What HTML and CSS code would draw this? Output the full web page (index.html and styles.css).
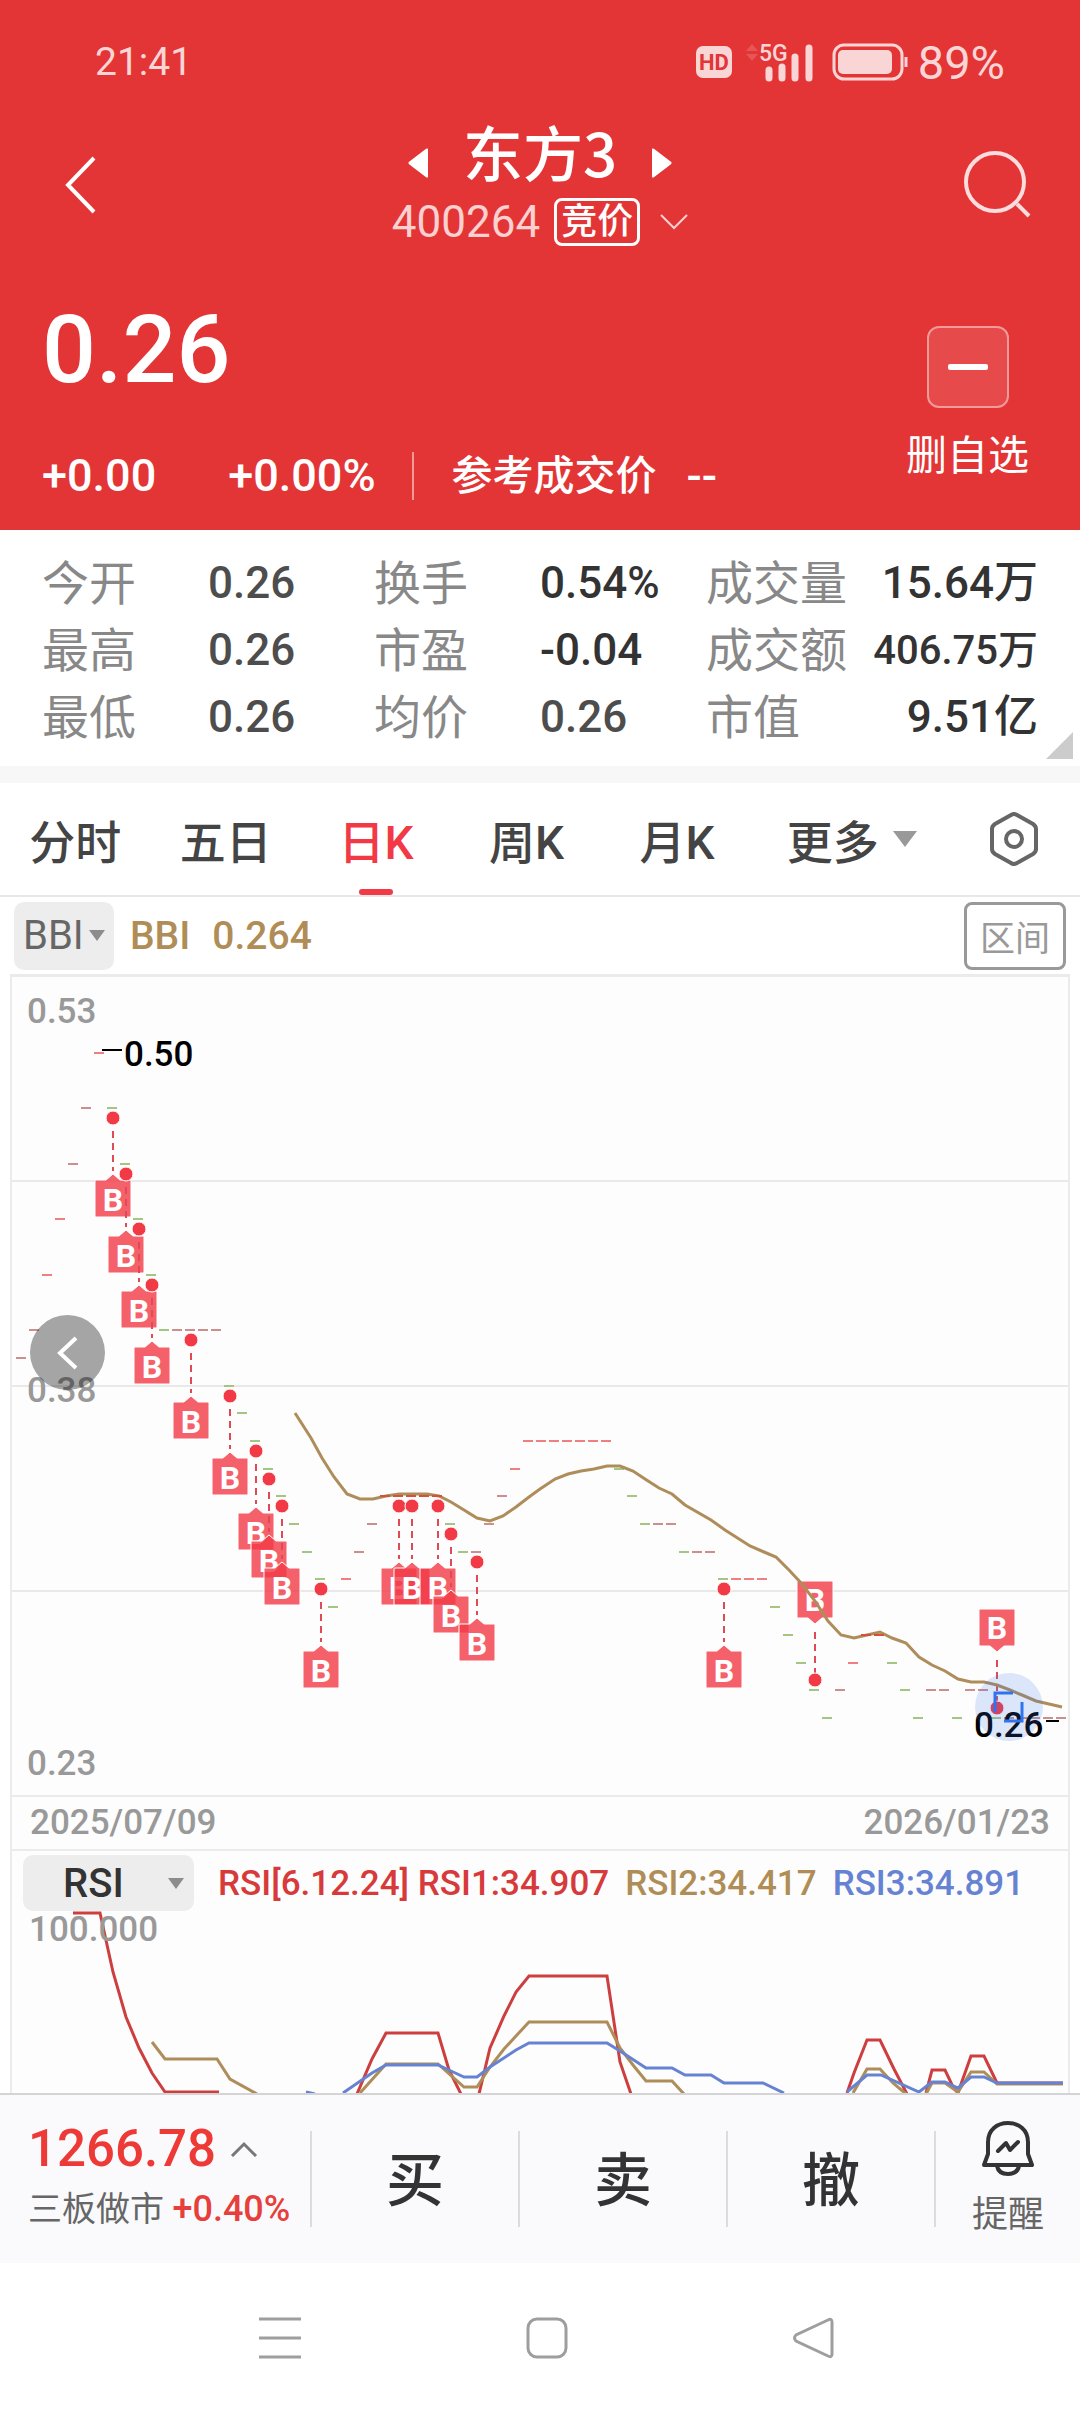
FILE: index.html
```html
<!DOCTYPE html>
<html lang="zh-CN">
<head>
  <meta charset="UTF-8">
  <meta name="viewport" content="width=device-width, initial-scale=1.0">
  <title>东方3 400264</title>
  <link rel="stylesheet" href="styles.css">
</head>
<body>
  <header class="top">
    <div class="status-bar">
      <span class="clock">21:41</span>
      <div class="status-icons">
        <svg class="icon-hd" viewBox="0 0 36 32" width="36" height="32">
          <rect width="36" height="32" rx="7" fill="currentColor"/>
          <text x="18" y="24" text-anchor="middle" class="hd-text">HD</text>
        </svg>
        <svg class="icon-signal" viewBox="0 -8 68 54" width="68" height="54">
          <path d="M0 8l6-7 6 7zM0 11l6 7 6-7z" fill="#fff" opacity=".16"/>
          <text x="13" y="18" class="net-text">5G</text>
          <path d="M23 27v8M36 24v11M49 14v21M63 5v30" stroke="currentColor" stroke-width="7" stroke-linecap="round"/>
        </svg>
        <svg class="icon-battery" viewBox="0 0 76 38" width="76" height="38">
          <rect x="2" y="2" width="68" height="34" rx="10" fill="none" stroke="currentColor" stroke-width="3"/>
          <rect x="6" y="7" width="54" height="24" rx="5" fill="currentColor"/>
          <path d="M74 14v10" stroke="currentColor" stroke-width="3"/>
        </svg>
        <span class="percent">89%</span>
      </div>
    </div>

    <div class="title-bar">
      <button class="icon-btn back" aria-label="返回">
        <svg viewBox="0 0 32 58" width="32" height="58"><path d="M29 2L3 29l26 27" fill="none" stroke="#fff" stroke-width="4"/></svg>
      </button>
      <div class="title">
        <div class="title-row">
          <button class="icon-btn" aria-label="上一只">
            <svg viewBox="0 0 20 30" width="20" height="30"><path d="M19 2v26L2 15z" fill="#fff" stroke="#fff" stroke-width="3" stroke-linejoin="round"/></svg>
          </button>
          <h1>东方3</h1>
          <button class="icon-btn" aria-label="下一只">
            <svg viewBox="0 0 20 30" width="20" height="30"><path d="M1 2v26l17-13z" fill="#fff" stroke="#fff" stroke-width="3" stroke-linejoin="round"/></svg>
          </button>
        </div>
        <div class="code-row">
          <span class="code">400264</span>
          <span class="badge">竞价</span>
          <svg viewBox="0 0 28 16" width="28" height="16"><path d="M1 1l13 13L27 1" fill="none" stroke="#fbd0d0" stroke-width="2"/></svg>
        </div>
      </div>
      <button class="icon-btn search" aria-label="搜索">
        <svg viewBox="0 0 68 70" width="68" height="70"><circle cx="32" cy="32" r="29" fill="none" stroke="#fcdcdc" stroke-width="4"/><path d="M54 54l12 12" stroke="#fcdcdc" stroke-width="4"/></svg>
      </button>
    </div>

    <div class="quote">
      <div class="quote-main">
        <div class="price">0.26</div>
        <div class="change">
          <span>+0.00</span>
          <span class="rate">+0.00%</span>
          <span class="ref">参考成交价</span>
          <span>--</span>
        </div>
      </div>
      <button class="watch">
        <span class="watch-icon"></span>
        <span>删自选</span>
      </button>
    </div>
  </header>

  <main>
    <dl class="stats">
      <dt>今开</dt><dd class="flat">0.26</dd>
      <dt>换手</dt><dd>0.54%</dd>
      <dt>成交量</dt><dd class="end">15.64万</dd>
      <dt>最高</dt><dd class="flat">0.26</dd>
      <dt>市盈</dt><dd>-0.04</dd>
      <dt>成交额</dt><dd class="end small">406.75万</dd>
      <dt>最低</dt><dd class="flat">0.26</dd>
      <dt>均价</dt><dd class="flat">0.26</dd>
      <dt>市值</dt><dd class="end">9.51亿</dd>
    </dl>

    <nav class="tabs">
      <button>分时</button>
      <button>五日</button>
      <button class="active">日K</button>
      <button>周K</button>
      <button>月K</button>
      <button class="more">更多</button>
      <button aria-label="设置">
        <svg viewBox="0 0 50 54" width="50" height="54" fill="none" stroke="#666" stroke-width="4">
          <path d="M22 3q3-2 6 0l16 9q3 2 3 5v20q0 3-3 5l-16 9q-3 2-6 0L6 42q-3-2-3-5V17q0-3 3-5z"/>
          <circle cx="25" cy="27" r="8"/>
        </svg>
      </button>
    </nav>

    <div class="indicator">
      <label class="picker picker-main">
        <select aria-label="主图指标"><option>BBI</option></select>
      </label>
      <div class="indicator-values gold">
        <span>BBI</span>
        <span>0.264</span>
      </div>
      <button class="range">区间</button>
    </div>

    <section class="chart">
      <svg class="kline" viewBox="12 3 1056 818" role="img" aria-label="日K">
        <defs>
          <!-- buy marker under the candle, origin at the dot -->
          <g id="buy">
            <path d="M0 13v40" class="marker-line"/>
            <path d="M-17 62h10l7-6 7 6h10q1 0 1 1v35q0 1-1 1h-34q-1 0-1-1V63q0-1 1-1z" class="marker-box"/>
            <text x="0" y="93" class="marker-text">B</text>
            <circle r="7" class="marker-dot"/>
          </g>
          <!-- buy marker above the candle -->
          <g id="buy-top">
            <path d="M0-48V-6" class="marker-line"/>
            <path d="M-17-62h10l7 6 7-6h10q1 0 1-1v-35q0-1-1-1h-34q-1 0-1 1v35q0 1 1 1z" class="marker-box"/>
            <text x="0" y="-69" class="marker-text">B</text>
            <circle r="7" class="marker-dot"/>
          </g>
        </defs>

        <path d="M12 207h1056M12 412h1056M12 617h1056" class="grid"/>

        <path class="tick up" d="M42 301h10M55 245h10M94 79h10M341 605h10M510 495h10M523 467h10M536 467h10M549 467h10M562 467h10M575 467h10M588 467h10M601 467h10M731 605h10M744 605h10M757 605h10M848 689h10M861 661h10M874 661h10"/>
        <path class="tick even" d="M16 384h10M29 356h10M68 190h10M81 134h10M172 356h10M185 356h10M198 356h10M211 356h10M354 578h10M367 550h10M471 578h10M484 550h10M497 522h10M653 550h10M666 550h10M692 578h10M705 578h10M835 716h10M926 716h10M939 716h10M965 716h10M978 716h10M1004 744h10M1017 744h10M1030 744h10M1043 744h10M1056 744h10"/>
        <path class="tick down" d="M107 134h10M120 190h10M133 245h10M146 301h10M159 356h10M224 412h10M237 439h10M250 467h10M263 495h10M276 522h10M289 550h10M302 578h10M315 605h10M328 633h10M445 550h10M458 578h10M614 495h10M627 522h10M640 550h10M679 578h10M718 605h10M770 633h10M783 661h10M796 689h10M809 716h10M822 744h10M887 689h10M913 744h10M900 716h10M952 744h10M991 744h10"/>

        <text x="27" y="49" class="axis">0.53</text>
        <text x="27" y="428" class="axis">0.38</text>
        <text x="27" y="801" class="axis">0.23</text>

        <use href="#buy" x="113" y="144"/>
        <use href="#buy" x="126" y="200"/>
        <use href="#buy" x="139" y="255"/>
        <use href="#buy" x="152" y="311"/>
        <use href="#buy" x="191" y="366"/>
        <use href="#buy" x="230" y="422"/>
        <use href="#buy" x="256" y="477"/>
        <use href="#buy" x="269" y="505"/>
        <use href="#buy" x="282" y="532"/>
        <use href="#buy" x="321" y="615"/>
        <use href="#buy" x="399" y="532"/>
        <use href="#buy" x="412" y="532"/>
        <use href="#buy" x="438" y="532"/>
        <use href="#buy" x="451" y="560"/>
        <use href="#buy" x="477" y="588"/>
        <use href="#buy" x="724" y="615"/>
        <use href="#buy-top" x="815" y="706"/>
        <use href="#buy-top" x="997" y="734"/>

        <polyline class="line gold-line" points="295,439 311,464 322,484 334,503 347,520 360,525 373,525 386,522 399,520 427,520 439,522 451,528 464,536 477,544 490,547 503,542 516,533 529,523 540,515 555,505 568,500 581,497 594,495 607,492 620,492 633,497 645,505 659,514 672,520 685,531 711,546 725,556 750,572 764,578 776,583 789,596 802,610 815,627 828,647 841,661 854,664 867,661 880,658 892,664 906,669 919,683 932,691 945,697 958,705 971,708 984,708 997,711 1010,716 1022,721 1036,727 1062,733"/>
        <path class="tick over" d="M380 522h10M393 522h10M406 522h10M419 522h10M432 522h10M861 661h10M874 661h10"/>

        <text x="124" y="92" class="extreme">0.50</text>
        <path d="M102 76h20M1046 747h13" class="extreme-line"/>
        <text x="974" y="763" class="extreme">0.26</text>

        <circle cx="1009" cy="733" r="34" fill="#3c78f0" opacity=".17"/>
        <path d="M995 738v-19h18M1022 728v19h-18" fill="none" stroke="#2f74ee" stroke-width="3"/>
      </svg>
      <button class="scroll-left" aria-label="向左">
        <svg viewBox="0 0 22 36" width="22" height="36"><path d="M19 3L3 18l16 15" fill="none" stroke="#fff" stroke-width="4"/></svg>
      </button>

      <div class="dates">
        <span>2025/07/09</span>
        <span>2026/01/23</span>
      </div>

      <div class="rsi-legend">
        <label class="picker picker-sub">
          <select aria-label="副图指标"><option>RSI</option></select>
        </label>
        <span class="red">RSI[6.12.24] RSI1:34.907</span>
        <span class="gold">RSI2:34.417</span>
        <span class="blue">RSI3:34.891</span>
      </div>
      <svg class="rsi" viewBox="12 -6 1056 188" role="img" aria-label="RSI">
        <g class="line red-line">
          <polyline points="73,2 100,2 113,61 126,106 139,137 152,162 165,181 219,181"/>
          <polyline points="357,183 372,148 386,122 438,122 449,159 461,183"/>
          <polyline points="479,183 490,137 504,105 516,81 529,65 607,65 620,151 631,183"/>
          <polyline points="847,182 854,162 867,129 880,129 894,158 907,183"/>
          <polyline points="926,182 932,159 945,159 953,176 958,182 960,176 971,145 984,145 997,172 1063,172"/>
        </g>
        <g class="line gold-line">
          <polyline points="152,131 165,148 217,148 230,168 257,183"/>
          <polyline points="360,182 386,153 438,153 464,176 477,176 490,156 504,138 516,125 529,111 607,111 620,137 633,154 646,170 672,170 684,183"/>
          <polyline points="853,182 867,158 880,158 893,172 906,183"/>
          <polyline points="926,183 932,172 945,172 958,181 971,161 984,161 997,173 1063,173"/>
        </g>
        <g class="line blue-line">
          <polyline points="306,181 315,183"/>
          <polyline points="343,182 372,162 386,154 438,154 451,160 464,166 477,166 490,156 516,139 529,132 607,132 620,140 646,157 672,157 685,164 711,164 724,172 763,172 784,182"/>
          <polyline points="847,181 867,164 881,164 919,181 932,171 945,171 958,177 971,166 984,166 997,172 1063,172"/>
        </g>
        <text x="29" y="30" class="axis">100.000</text>
      </svg>
    </section>
  </main>

  <footer>
    <div class="trade-bar">
      <div class="index">
        <div class="index-value">
          1266.78
          <svg viewBox="0 0 28 16" width="28" height="16"><path d="M2 15L14 3l12 12" fill="none" stroke="#777" stroke-width="3"/></svg>
        </div>
        <div class="index-name">三板做市 <span>+0.40%</span></div>
      </div>
      <button class="trade">买</button>
      <button class="trade">卖</button>
      <button class="trade">撤</button>
      <button class="remind">
        <svg viewBox="0 0 54 56" width="54" height="56" fill="none" stroke="#333" stroke-width="4" stroke-linejoin="round" stroke-linecap="round">
          <path d="M7 34V22C7 10 16 3 27 3s20 7 20 19v12l4 11H3z"/>
          <path d="M16 46c1 5 5 8 11 8s10-3 11-8"/>
          <path d="M17 31l8-8 4 7 8-8"/>
        </svg>
        <span>提醒</span>
      </button>
    </div>

    <div class="system-nav">
      <button class="icon-btn" aria-label="菜单">
        <svg viewBox="0 0 44 44" width="44" height="44" fill="none" stroke="#9e9e9e" stroke-width="3"><path d="M1 3h42M1 22h42M1 41h42"/></svg>
      </button>
      <button class="icon-btn" aria-label="主页">
        <svg viewBox="0 0 44 44" width="44" height="44" fill="none" stroke="#9e9e9e" stroke-width="3"><rect x="3" y="3" width="38" height="38" rx="9"/></svg>
      </button>
      <button class="icon-btn" aria-label="后退">
        <svg viewBox="0 0 44 44" width="44" height="44" fill="none" stroke="#9e9e9e" stroke-width="3"><path d="M36 4q4-2 4 2v32q0 4-4 2L4 25q-3-3 0-6z"/></svg>
      </button>
    </div>
  </footer>
</body>
</html>
```

FILE: styles.css
```css
* {
  box-sizing: border-box;
}
body {
  margin: 0;
  background-color: #fff;
  color: #333;
  font-family: Roboto, "Noto Sans CJK SC", sans-serif;
}
button, select {
  margin: 0;
  padding: 0;
  border: none;
  background: none;
  color: inherit;
  font: inherit;
  cursor: pointer;
}
svg {
  display: block;
  flex-shrink: 0;
}
.icon-btn {
  display: flex;
}
.gold {
  color: #b08d57;
}
.red {
  color: #d63a3a;
}
.blue {
  color: #6683d3;
}

/* header */
.top {
  background-color: #e33536;
  color: #fff;
}
.status-bar {
  display: flex;
  justify-content: space-between;
  align-items: center;
  height: 124px;
  padding: 0 75px 0 95px;
  color: #f9d5d5;
}
.clock {
  font-size: 39px;
}
.status-icons {
  display: flex;
  align-items: center;
}
.icon-signal {
  margin: 0 18px 0 14px;
}
.percent {
  margin-left: 10px;
  font-size: 47px;
}
.hd-text {
  fill: #e33536;
  font-size: 22px;
  font-weight: bold;
}
.net-text {
  fill: currentColor;
  font-size: 23px;
  font-weight: 500;
}
.title-bar {
  display: grid;
  grid-template-columns: 1fr auto 1fr;
  align-items: center;
  height: 120px;
  padding: 0 49px;
}
.back {
  padding-left: 16px;
}
.search {
  justify-self: end;
}
.title-row, .code-row {
  display: flex;
  justify-content: center;
}
.title-row {
  align-items: flex-end;
  gap: 35px;
}
.title h1 {
  margin: 0;
  font-family: "Noto Sans CJK SC", sans-serif;
  font-size: 60px;
  font-weight: 500;
  line-height: 54px;
}
.code-row {
  align-items: center;
  margin-top: 20px;
}
.code {
  color: #fbd0d0;
  font-size: 44px;
  line-height: 48px;
}
.badge {
  margin: 0 20px 0 14px;
  padding: 0 4px;
  border: 3px solid #fff;
  border-radius: 8px;
  font-size: 36px;
  font-weight: 500;
  line-height: 42px;
}
.quote {
  display: flex;
  justify-content: space-between;
  padding: 56px 51px 30px 42px;
}
.price {
  font-size: 95px;
  font-weight: 500;
  line-height: 100px;
}
.change {
  display: flex;
  align-items: center;
  margin-top: 52px;
  font-size: 45px;
  font-weight: 500;
  line-height: 48px;
}
.rate {
  margin-left: 72px;
}
.ref {
  margin: 0 30px 0 36px;
  padding-left: 38px;
  border-left: 2px solid #f09a9a;
  font-size: 41px;
}
.watch {
  display: flex;
  flex-direction: column;
  align-items: center;
  gap: 24px;
  padding-top: 26px;
  font-size: 41px;
  line-height: 48px;
}
.watch-icon {
  display: flex;
  justify-content: center;
  align-items: center;
  width: 82px;
  height: 82px;
  border: 2px solid #f09a9a;
  border-radius: 12px;
  background-color: #e64a4b;
}
.watch-icon::before {
  content: "";
  width: 40px;
  height: 6px;
  border-radius: 2px;
  background-color: #fff;
}

/* quote numbers */
.stats {
  display: grid;
  grid-template-columns: repeat(6, 1fr);
  position: relative;
  margin: 0;
  padding: 20px 42px 15px 42px;
  border-bottom: 17px solid #f7f7f7;
  line-height: 67px;
  white-space: nowrap;
}
.stats::after {
  content: "";
  position: absolute;
  right: 7px;
  bottom: 7px;
  border-left: 27px solid transparent;
  border-bottom: 27px solid #ccc;
}
.stats dt {
  color: #888;
  font-size: 47px;
}
.stats dd {
  margin: 0;
  font-size: 44px;
  font-weight: 500;
}
.stats .flat {
  color: #4d4d4d;
}
.stats .end {
  text-align: right;
}
.stats .small {
  font-size: 40px;
}

/* period tabs */
.tabs {
  display: grid;
  grid-template-columns: repeat(5, 151fr) 200fr 125fr;
  height: 114px;
  padding-right: 4px;
  border-bottom: 2px solid #e8e8e8;
  color: #444;
  font-size: 46px;
  font-weight: 500;
}
.tabs button {
  display: flex;
  justify-content: center;
  align-items: center;
  position: relative;
}
.tabs .active {
  color: #f23a46;
}
.tabs .active::after {
  content: "";
  position: absolute;
  bottom: 0;
  width: 34px;
  height: 6px;
  border-radius: 3px;
  background-color: #f23a46;
}
.more::after, .picker::after {
  content: "";
  border: 8px solid transparent;
  border-top: 11px solid #8c8c8c;
  border-bottom: none;
}
.more::after {
  margin-left: 14px;
  border-width: 16px 12px 0;
  border-top-color: #999;
}

/* indicator row */
.indicator {
  display: flex;
  align-items: center;
  gap: 16px;
  height: 77px;
  padding: 0 14px;
}
.indicator-values {
  display: flex;
  gap: 22px;
  font-size: 39px;
  font-weight: 500;
}
.picker {
  display: flex;
  align-items: center;
  border-radius: 10px;
  background-color: #ededed;
}
.picker select {
  appearance: none;
  font-size: 40px;
}
.picker-main {
  height: 68px;
  padding: 0 9px;
  color: #666;
}
.picker-main select {
  width: 66px;
}
.picker-sub {
  height: 56px;
  margin-right: 8px;
  padding: 0 10px 0 40px;
}
.picker-sub select {
  width: 105px;
  font-weight: 500;
}
.range {
  width: 102px;
  height: 68px;
  margin-left: auto;
  border: 3px solid #999;
  border-radius: 8px;
  color: #999;
  font-size: 35px;
}

/* charts */
.chart {
  position: relative;
  margin: 0 10px;
  border: 2px solid #ebebeb;
  border-top-width: 3px;
  border-bottom: none;
  background-color: #fdfdfd;
}
.kline, .rsi {
  width: 100%;
}
.rsi {
  margin-top: -6px;
}
.grid {
  stroke: #e9e9e9;
  stroke-width: 2;
}
.axis {
  fill: #999;
  font-size: 35px;
  font-weight: 500;
}
.extreme {
  fill: #000;
  font-size: 35px;
  font-weight: 500;
}
.extreme-line {
  stroke: #000;
  stroke-width: 2;
}
.tick {
  stroke-width: 2;
}
.up {
  stroke: #f08080;
}
.even {
  stroke: #cb8f8f;
}
.down {
  stroke: #a5c583;
}
.over {
  stroke: #d6503f;
}
.marker-line {
  stroke: #e04a55;
  stroke-width: 2;
  stroke-dasharray: 7 5;
}
.marker-box {
  fill: #f23a46;
  fill-opacity: .8;
  stroke: #fff;
  stroke-width: 1;
}
.marker-dot {
  fill: #f23a46;
  stroke: #fff;
  stroke-width: 1;
}
.marker-text {
  fill: #fff;
  font-size: 32px;
  font-weight: bold;
  text-anchor: middle;
}
.line {
  fill: none;
  stroke-width: 3;
}
.gold-line {
  stroke: #ae8d5a;
}
.red-line {
  stroke: #cd3f3f;
}
.blue-line {
  stroke: #6683d3;
}
.scroll-left {
  display: flex;
  justify-content: center;
  align-items: center;
  position: absolute;
  top: 338px;
  left: 18px;
  width: 75px;
  height: 75px;
  border-radius: 50%;
  background-color: rgba(0, 0, 0, .35);
}
.dates {
  display: flex;
  justify-content: space-between;
  padding: 0 18px;
  border: 2px solid #ebebeb;
  border-width: 2px 0;
  color: #999;
  font-size: 35px;
  font-weight: 500;
  line-height: 52px;
}
.rsi-legend {
  display: flex;
  align-items: center;
  gap: 16px;
  height: 60px;
  padding: 4px 0 0 11px;
  font-size: 35px;
  font-weight: 500;
  white-space: nowrap;
}

/* bottom bars */
.trade-bar {
  display: grid;
  grid-template-columns: 310fr repeat(3, 208fr) 146fr;
  align-items: center;
  height: 170px;
  border-top: 2px solid #d4d4d6;
  background-color: #fafafd;
}
.index {
  padding-left: 28px;
  white-space: nowrap;
}
.index-value {
  display: flex;
  align-items: center;
  gap: 14px;
  color: #ee3a36;
  font-size: 51px;
  font-weight: 500;
  line-height: 60px;
}
.index-name {
  color: #666;
  font-size: 34px;
  line-height: 60px;
}
.index-name span {
  color: #e63f3c;
  font-size: 36px;
  font-weight: 500;
}
.trade, .remind {
  height: 96px;
  border-left: 2px solid #dcdcde;
}
.trade {
  padding-top: 4px;
  font-size: 58px;
  font-weight: 500;
  line-height: 92px;
}
.remind {
  display: flex;
  flex-direction: column;
  justify-content: center;
  align-items: center;
  gap: 16px;
  color: #666;
  font-size: 36px;
  line-height: 46px;
}
.system-nav {
  display: flex;
  justify-content: center;
  align-items: center;
  gap: 223px;
  height: 149px;
  padding-left: 14px;
}
```
